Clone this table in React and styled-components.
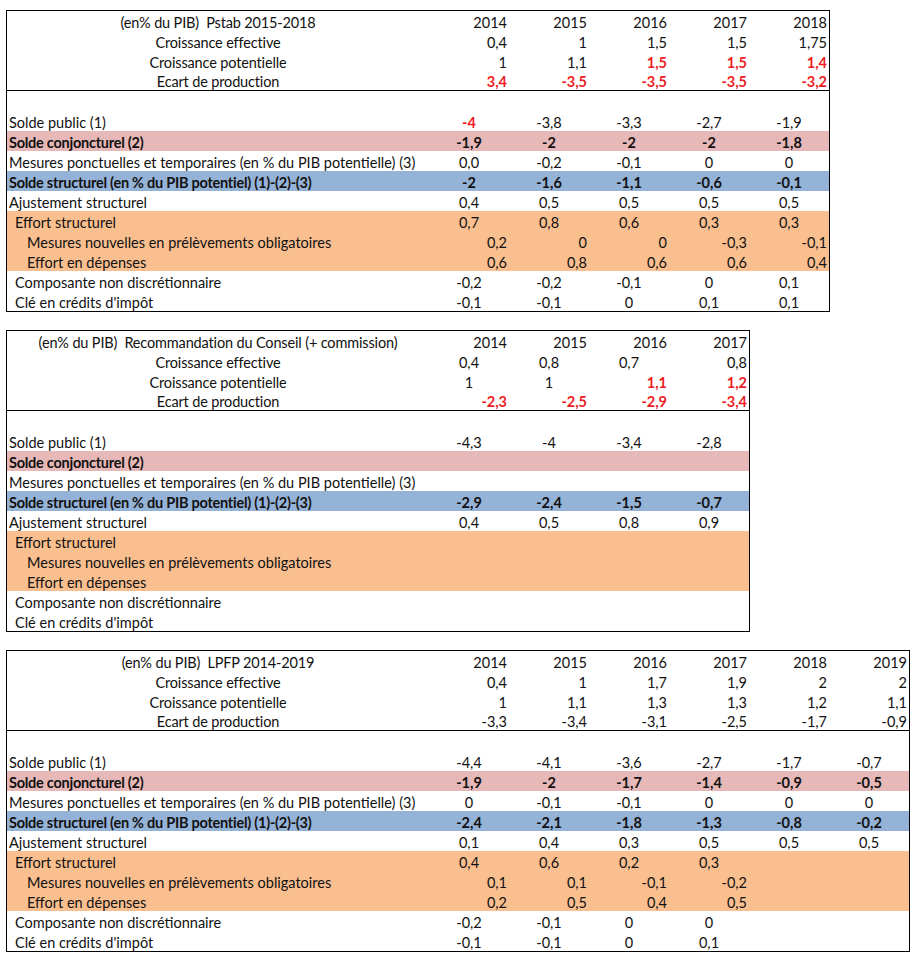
import styled, { createGlobalStyle } from 'styled-components';

const FILLS = {
  pink: '#e6b8b7',
  blue: '#95b3d7',
  orange: '#fabf8f',
};

const BODY_LABELS = [
  { label: '', indent: 0 },
  { label: 'Solde public (1)', indent: 0 },
  { label: 'Solde conjoncturel (2)', indent: 0, bold: true, fill: 'pink' },
  { label: 'Mesures ponctuelles et temporaires (en % du PIB potentielle) (3)', indent: 0 },
  { label: 'Solde structurel (en % du PIB potentiel) (1)-(2)-(3)', indent: 0, bold: true, fill: 'blue' },
  { label: 'Ajustement structurel', indent: 0 },
  { label: 'Effort structurel', indent: 1, fill: 'orange' },
  { label: 'Mesures nouvelles en prélèvements obligatoires', indent: 2, fill: 'orange' },
  { label: 'Effort en dépenses', indent: 2, fill: 'orange' },
  { label: 'Composante non discrétionnaire', indent: 1 },
  { label: "Clé en crédits d'impôt", indent: 1 },
];

const HEAD_LABELS = ['Croissance effective', 'Croissance potentielle', 'Ecart de production'];

// r = right aligned, c = centered, ! = red bold
const tables = [
  {
    title: '(en% du PIB)  Pstab 2015-2018',
    years: ['2014', '2015', '2016', '2017', '2018'],
    head: [
      ['r:0,4', 'r:1', 'r:1,5', 'r:1,5', 'r:1,75'],
      ['r:1', 'r:1,1', 'r!:1,5', 'r!:1,5', 'r!:1,4'],
      ['r!:3,4', 'r!:-3,5', 'r!:-3,5', 'r!:-3,5', 'r!:-3,2'],
    ],
    body: [
      [],
      ['c!:-4', 'c:-3,8', 'c:-3,3', 'c:-2,7', 'c:-1,9'],
      ['c:-1,9', 'c:-2', 'c:-2', 'c:-2', 'c:-1,8'],
      ['c:0,0', 'c:-0,2', 'c:-0,1', 'c:0', 'c:0'],
      ['c:-2', 'c:-1,6', 'c:-1,1', 'c:-0,6', 'c:-0,1'],
      ['c:0,4', 'c:0,5', 'c:0,5', 'c:0,5', 'c:0,5'],
      ['c:0,7', 'c:0,8', 'c:0,6', 'c:0,3', 'c:0,3'],
      ['r:0,2', 'r:0', 'r:0', 'r:-0,3', 'r:-0,1'],
      ['r:0,6', 'r:0,8', 'r:0,6', 'r:0,6', 'r:0,4'],
      ['c:-0,2', 'c:-0,2', 'c:-0,1', 'c:0', 'c:0,1'],
      ['c:-0,1', 'c:-0,1', 'c:0', 'c:0,1', 'c:0,1'],
    ],
  },
  {
    title: '(en% du PIB)  Recommandation du Conseil (+ commission)',
    years: ['2014', '2015', '2016', '2017'],
    head: [
      ['c:0,4', 'c:0,8', 'c:0,7', 'r:0,8'],
      ['c:1', 'c:1', 'r!:1,1', 'r!:1,2'],
      ['r!:-2,3', 'r!:-2,5', 'r!:-2,9', 'r!:-3,4'],
    ],
    body: [
      [],
      ['c:-4,3', 'c:-4', 'c:-3,4', 'c:-2,8'],
      [],
      [],
      ['c:-2,9', 'c:-2,4', 'c:-1,5', 'c:-0,7'],
      ['c:0,4', 'c:0,5', 'c:0,8', 'c:0,9'],
      [],
      [],
      [],
      [],
      [],
    ],
  },
  {
    title: '(en% du PIB)  LPFP 2014-2019',
    years: ['2014', '2015', '2016', '2017', '2018', '2019'],
    head: [
      ['r:0,4', 'r:1', 'r:1,7', 'r:1,9', 'r:2', 'r:2'],
      ['r:1', 'r:1,1', 'r:1,3', 'r:1,3', 'r:1,2', 'r:1,1'],
      ['r:-3,3', 'r:-3,4', 'r:-3,1', 'r:-2,5', 'r:-1,7', 'r:-0,9'],
    ],
    body: [
      [],
      ['c:-4,4', 'c:-4,1', 'c:-3,6', 'c:-2,7', 'c:-1,7', 'c:-0,7'],
      ['c:-1,9', 'c:-2', 'c:-1,7', 'c:-1,4', 'c:-0,9', 'c:-0,5'],
      ['c:0', 'c:-0,1', 'c:-0,1', 'c:0', 'c:0', 'c:0'],
      ['c:-2,4', 'c:-2,1', 'c:-1,8', 'c:-1,3', 'c:-0,8', 'c:-0,2'],
      ['c:0,1', 'c:0,4', 'c:0,3', 'c:0,5', 'c:0,5', 'c:0,5'],
      ['c:0,4', 'c:0,6', 'c:0,2', 'c:0,3'],
      ['r:0,1', 'r:0,1', 'r:-0,1', 'r:-0,2'],
      ['r:0,2', 'r:0,5', 'r:0,4', 'r:0,5'],
      ['c:-0,2', 'c:-0,1', 'c:0', 'c:0'],
      ['c:-0,1', 'c:-0,1', 'c:0', 'c:0,1'],
    ],
  },
];

function parseCell(code) {
  if (!code) return { value: '', align: 'center', red: false };
  const [flags, value] = code.split(':');
  return {
    value,
    align: flags.startsWith('r') ? 'right' : 'center',
    red: flags.includes('!'),
  };
}

function DataTable({ title, years, head, body }) {
  const cols = years.length;
  const headRows = [
    { label: title, cells: years.map((y) => `r:${y}`) },
    ...HEAD_LABELS.map((label, i) => ({ label, cells: head[i] })),
  ];

  return (
    <Table>
      {headRows.map((row, i) => (
        <Row key={row.label} $cols={cols} $rule={i === headRows.length - 1}>
          <HeadLabel>{row.label}</HeadLabel>
          {years.map((y, j) => {
            const cell = parseCell(row.cells[j]);
            return (
              <Value key={y} $align={cell.align} $red={cell.red}>
                {cell.value}
              </Value>
            );
          })}
        </Row>
      ))}
      {BODY_LABELS.map((meta, i) => (
        <Row key={i} $cols={cols} $fill={FILLS[meta.fill]}>
          <Label $indent={meta.indent} $bold={meta.bold}>
            {meta.label}
          </Label>
          {years.map((y, j) => {
            const cell = parseCell(body[i][j]);
            return (
              <Value key={y} $align={cell.align} $red={cell.red} $bold={meta.bold}>
                {cell.value}
              </Value>
            );
          })}
        </Row>
      ))}
    </Table>
  );
}

export default function App() {
  return (
    <>
      <GlobalStyle />
      <Sheet>
        {tables.map((t) => (
          <DataTable key={t.title} {...t} />
        ))}
      </Sheet>
    </>
  );
}

const GlobalStyle = createGlobalStyle`
  body {
    margin: 0;
    background: #fff;
    font-family: Lato, "Liberation Sans", sans-serif;
    color: #111;
  }
`;

const Sheet = styled.div`
  display: flex;
  flex-direction: column;
  align-items: flex-start;
  gap: 18px;
  padding: 10px 0 0 6px;
`;

const Table = styled.div`
  display: flex;
  flex-direction: column;
  border: 1px solid #000;
`;

const Row = styled.div`
  display: grid;
  grid-template-columns: 422px repeat(${({ $cols }) => $cols}, 80px);
  height: 20px;
  box-sizing: border-box;
  align-items: end;
  font-size: 14.5px;
  line-height: 16px;
  background: ${({ $fill }) => $fill || 'transparent'};
  border-bottom: ${({ $rule }) => ($rule ? '1px solid #000' : 'none')};
`;

const HeadLabel = styled.div`
  text-align: center;
  white-space: pre;
  letter-spacing: -0.15px;
`;

const Label = styled.div`
  padding-left: ${({ $indent }) => 2 + $indent * 6 + ($indent > 1 ? 6 : 0)}px;
  font-weight: ${({ $bold }) => ($bold ? 700 : 400)};
  letter-spacing: ${({ $bold }) => ($bold ? '-0.25px' : '0')};
  white-space: pre;
`;

const Value = styled.div`
  text-align: ${({ $align }) => $align};
  padding-right: ${({ $align }) => ($align === 'right' ? '2px' : '0')};
  font-weight: ${({ $red, $bold }) => ($red || $bold ? 700 : 400)};
  color: ${({ $red }) => ($red ? '#ee1c25' : 'inherit')};
`;
